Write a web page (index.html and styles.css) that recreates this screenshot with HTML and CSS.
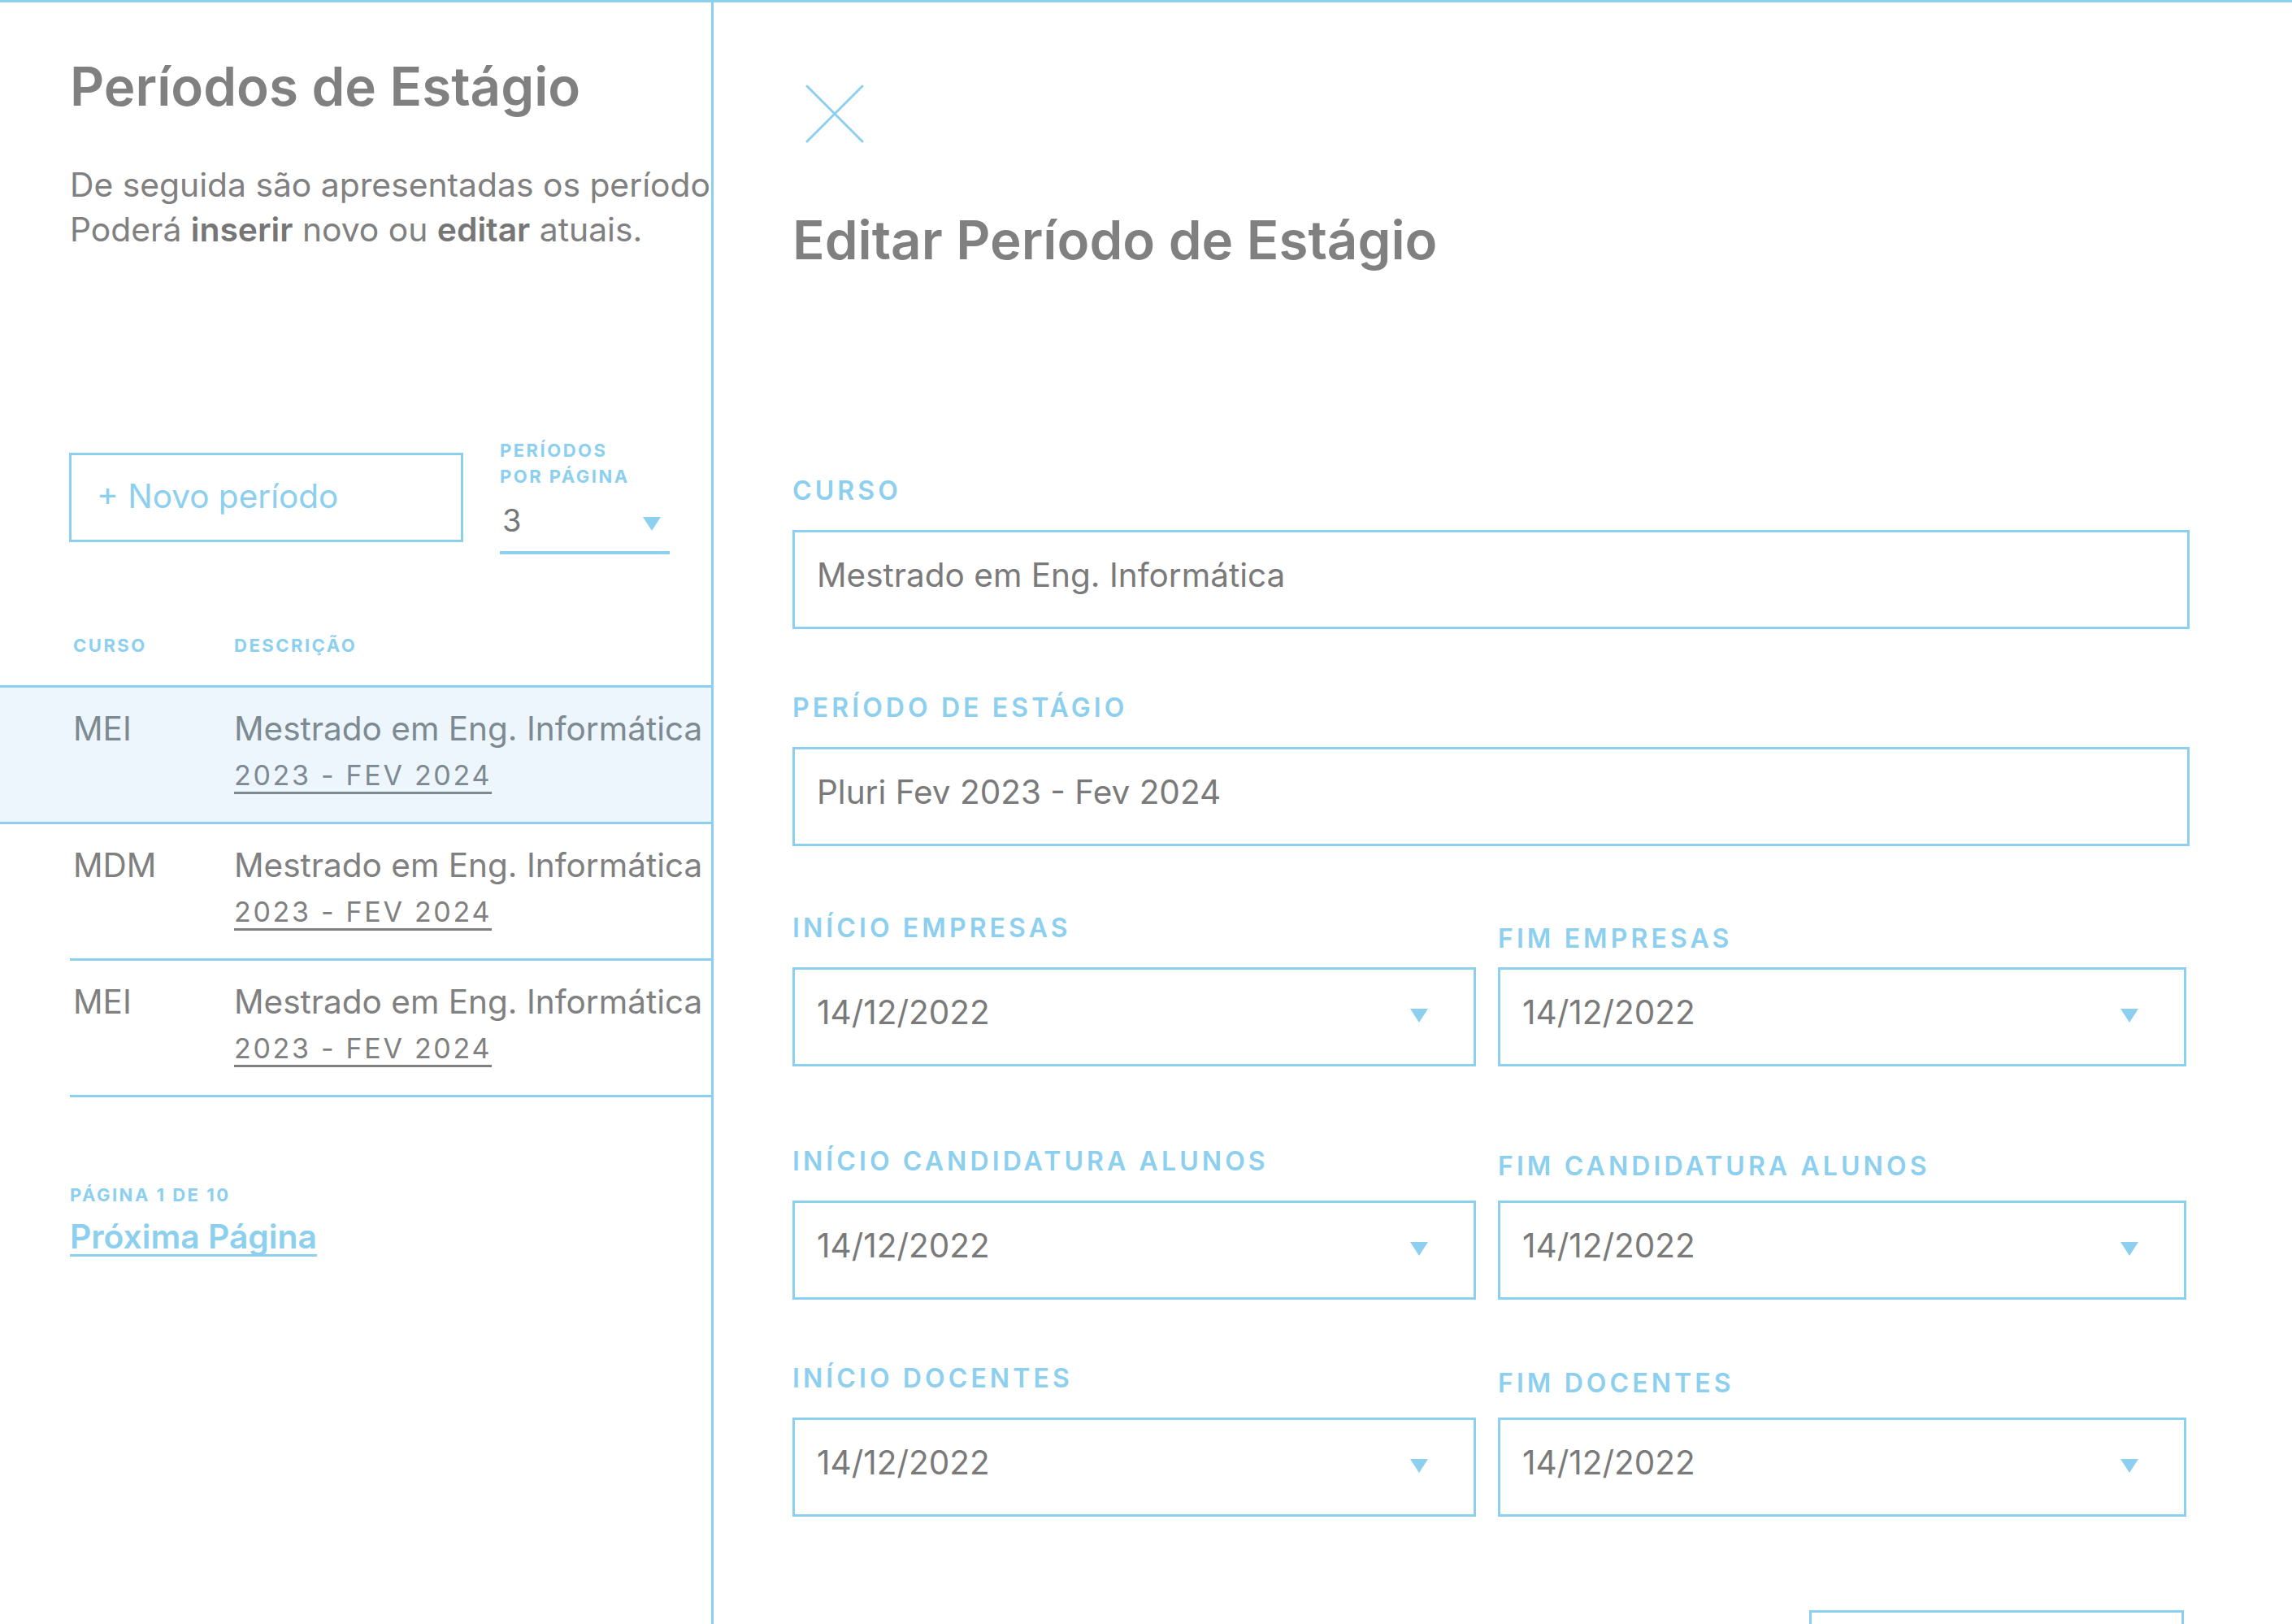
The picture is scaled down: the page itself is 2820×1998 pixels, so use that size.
FILE: index.html
```html
<!DOCTYPE html>
<html lang="pt">
<head>
<meta charset="utf-8">
<title>Períodos de Estágio</title>
<link rel="stylesheet" href="styles.css">
</head>
<body>
<div class="app">
  <aside class="list-panel">
    <header class="list-head">
      <h1 class="page-title">Períodos de Estágio</h1>
      <p class="intro">De seguida são apresentadas os períodos.<br>Poderá <b>inserir</b> novo ou <b>editar</b> atuais.</p>
    </header>

    <div class="controls">
      <button class="btn-new" type="button">+ Novo período</button>
      <div class="per-page">
        <span class="mini-label">Períodos<br>por página</span>
        <div class="select-value"><span>3</span><span class="tri"></span></div>
      </div>
    </div>

    <div class="table">
      <div class="thead">
        <span class="th th--curso">Curso</span>
        <span class="th">Descrição</span>
      </div>
      <div class="row row--active">
        <span class="cell-curso">MEI</span>
        <div class="cell-desc">
          <span class="desc-main">Mestrado em Eng. Informática</span>
          <span class="desc-date">2023 - FEV 2024</span>
        </div>
      </div>
      <div class="row">
        <span class="cell-curso">MDM</span>
        <div class="cell-desc">
          <span class="desc-main">Mestrado em Eng. Informática</span>
          <span class="desc-date">2023 - FEV 2024</span>
        </div>
      </div>
      <div class="row">
        <span class="cell-curso">MEI</span>
        <div class="cell-desc">
          <span class="desc-main">Mestrado em Eng. Informática</span>
          <span class="desc-date">2023 - FEV 2024</span>
        </div>
      </div>
    </div>

    <div class="pager">
      <span class="mini-label">Página 1 de 10</span>
      <a class="pager-next" href="#">Próxima Página</a>
    </div>
  </aside>

  <main class="edit-panel">
    <svg class="close" viewBox="0 0 72 72" aria-label="Fechar">
      <line x1="2" y1="2" x2="70" y2="70"/>
      <line x1="70" y1="2" x2="2" y2="70"/>
    </svg>
    <h2 class="edit-title">Editar Período de Estágio</h2>

    <div class="form">
      <div class="field">
        <span class="field-label">Curso</span>
        <div class="input">Mestrado em Eng. Informática</div>
      </div>
      <div class="field field--gap">
        <span class="field-label">Período de Estágio</span>
        <div class="input">Pluri Fev 2023 - Fev 2024</div>
      </div>

      <div class="pair field--gap-b">
        <div class="field">
          <span class="field-label">Início Empresas</span>
          <div class="input">14/12/2022<span class="tri"></span></div>
        </div>
        <div class="field">
          <span class="field-label field-label--lower">Fim Empresas</span>
          <div class="input">14/12/2022<span class="tri"></span></div>
        </div>
      </div>

      <div class="pair field--gap-c">
        <div class="field">
          <span class="field-label">Início Candidatura Alunos</span>
          <div class="input">14/12/2022<span class="tri"></span></div>
        </div>
        <div class="field">
          <span class="field-label field-label--low">Fim Candidatura Alunos</span>
          <div class="input">14/12/2022<span class="tri"></span></div>
        </div>
      </div>

      <div class="pair field--gap">
        <div class="field">
          <span class="field-label">Início Docentes</span>
          <div class="input">14/12/2022<span class="tri"></span></div>
        </div>
        <div class="field">
          <span class="field-label field-label--low">Fim Docentes</span>
          <div class="input">14/12/2022<span class="tri"></span></div>
        </div>
      </div>

      <div class="form-actions">
        <button class="btn-save" type="button" aria-label="Guardar"></button>
      </div>
    </div>
  </main>
</div>
</body>
</html>
```

FILE: styles.css
```css
* { box-sizing: border-box; margin: 0; padding: 0; }

html, body { height: 100%; }

body {
  font-family: "Inter", "Noto Sans", sans-serif;
  color: #808080;
  background: #ffffff;
  overflow: hidden;
}

.app {
  display: flex;
  height: 1998px;
  border-top: 3px solid #8ccfee;
}

/* ---------- left list panel ---------- */
.list-panel {
  width: 878px;
  flex: none;
  border-right: 3px solid #8ccfee;
  overflow: hidden;
}

.list-head {
  padding: 64px 0 0 86px;
  white-space: nowrap;
}

.page-title {
  font-size: 65.5px;
  line-height: 80px;
  font-weight: 600;
  color: #808080;
}

.intro {
  margin-top: 53px;
  font-size: 40.8px;
  line-height: 55px;
  color: #808080;
}

.intro b {
  font-weight: 600;
  color: #767676;
}

.controls {
  display: flex;
  align-items: flex-start;
  gap: 45px;
  margin: 228px 0 0 85px;
}

.btn-new {
  margin-top: 19px;
  width: 485px;
  height: 110px;
  border: 3px solid #8ccfee;
  background: #ffffff;
  color: #8ccfee;
  font-family: inherit;
  font-size: 40.5px;
  text-align: left;
  padding: 0 0 4px 31px;
}

.per-page {
  width: 209px;
  padding-bottom: 14px;
  border-bottom: 4px solid #8ccfee;
}

.mini-label {
  display: block;
  font-size: 22px;
  line-height: 32px;
  font-weight: 700;
  letter-spacing: 2.5px;
  color: #8ccfee;
  text-transform: uppercase;
}

.select-value {
  display: flex;
  justify-content: space-between;
  align-items: center;
  margin-top: 14px;
  padding: 0 11px 0 3px;
  font-size: 38px;
  line-height: 48px;
  color: #777777;
}

.tri {
  width: 0;
  height: 0;
  border-left: 11px solid transparent;
  border-right: 11px solid transparent;
  border-top: 17px solid #8ccfee;
}

.select-value .tri { margin-top: 8px; }

/* table */
.table { margin-top: 97px; }

.thead {
  display: flex;
  padding: 0 0 34px 90px;
  border-bottom: 3px solid #8ccfee;
}

.th {
  font-size: 22px;
  line-height: 30px;
  font-weight: 700;
  letter-spacing: 2.5px;
  color: #8ccfee;
  text-transform: uppercase;
}

.th--curso { width: 198px; flex: none; }

.row {
  display: flex;
  margin-left: 86px;
  padding: 23px 0 28px 4px;
  border-bottom: 3px solid #8ccfee;
  white-space: nowrap;
}

.row--active {
  margin-left: 0;
  padding-left: 90px;
  background: #edf6fd;
  color: #7d8a91;
}

.cell-curso {
  width: 198px;
  flex: none;
  font-size: 40.5px;
  line-height: 56px;
}

.cell-desc {
  display: flex;
  flex-direction: column;
  align-items: flex-start;
}

.desc-main {
  font-size: 40.5px;
  line-height: 56px;
}

.desc-date {
  font-size: 34px;
  line-height: 58px;
  letter-spacing: 2.7px;
  text-decoration: underline;
  text-decoration-thickness: 3px;
  text-underline-offset: 8px;
}

/* pager */
.pager {
  margin: 105px 0 0 86px;
}

.pager .mini-label { line-height: 30px; }

.pager-next {
  display: inline-block;
  margin-top: 11px;
  font-size: 40.8px;
  line-height: 50px;
  font-weight: 600;
  color: #8ccfee;
  text-decoration: underline;
  text-decoration-thickness: 3px;
  text-underline-offset: 7px;
  text-decoration-skip-ink: none;
}

/* ---------- right edit panel ---------- */
.edit-panel {
  flex: 1;
  min-width: 0;
  padding: 101px 126px 0 97px;
  overflow: hidden;
}

.close {
  display: block;
  width: 72px;
  height: 72px;
  margin-left: 16px;
  stroke: #8ccfee;
  stroke-width: 3;
  stroke-linecap: round;
}

.edit-title {
  margin-top: 80px;
  font-size: 65.5px;
  line-height: 80px;
  font-weight: 600;
  color: #808080;
}

.form { margin-top: 248px; }

.field {
  display: flex;
  flex-direction: column;
}

.field--gap { margin-top: 77px; }
.field--gap-b { margin-top: 81px; }
.field--gap-c { margin-top: 97px; }

.field-label {
  display: block;
  margin-bottom: 28px;
  font-size: 32px;
  line-height: 40px;
  font-weight: 600;
  letter-spacing: 4.1px;
  color: #8ccfee;
  text-transform: uppercase;
  white-space: nowrap;
}

.field-label--low { padding-top: 6px; margin-bottom: 22px; }
.field-label--lower { padding-top: 13px; margin-bottom: 15px; }

.input {
  display: flex;
  align-items: center;
  justify-content: space-between;
  height: 122px;
  padding: 0 56px 11px 27px;
  border: 3px solid #8ccfee;
  font-size: 40.5px;
  color: #7a7a7a;
  white-space: nowrap;
}

.input .tri { margin-top: 8px; }

.pair {
  display: grid;
  grid-template-columns: 841px 1fr;
  column-gap: 27px;
  padding-right: 4px;
}

.form-actions {
  display: flex;
  justify-content: flex-end;
  margin-top: 115px;
}

.btn-save {
  width: 461px;
  height: 110px;
  margin-right: 7px;
  border: 3px solid #8ccfee;
  background: #ffffff;
}
```
